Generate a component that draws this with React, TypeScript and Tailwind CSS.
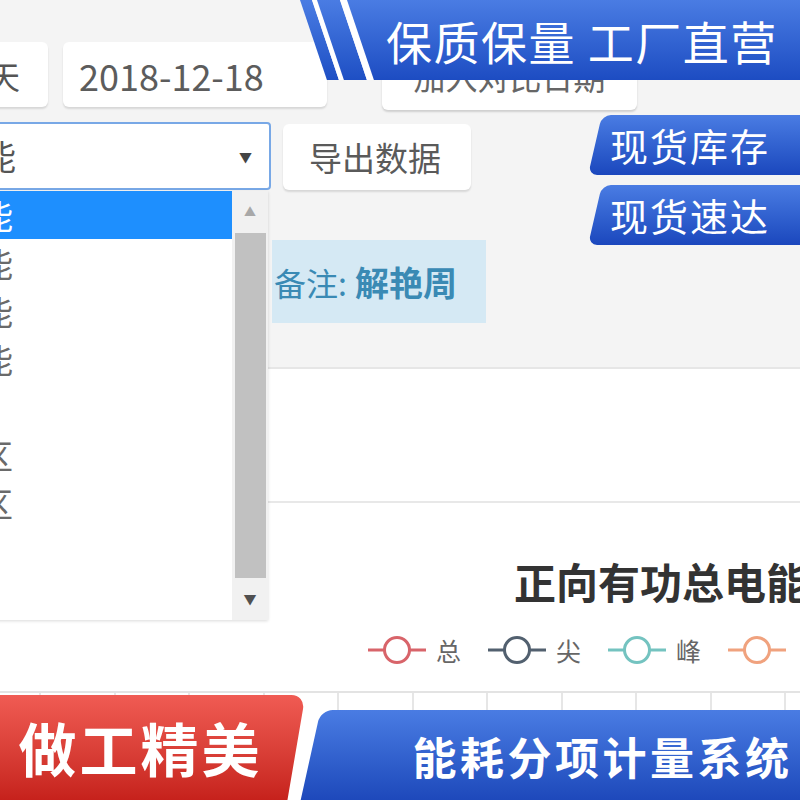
import React from "react";

const items = [
  { t: "正向有功总电能", sel: true, pr: 0 },
  { t: "反向有功总电能", sel: false, pr: 0 },
  { t: "正向无功总电能", sel: false, pr: 0 },
  { t: "反向无功总电能", sel: false, pr: 0 },
  { t: "电流", sel: false, pr: 60 },
  { t: "A区", sel: false, pr: 0 },
  { t: "B区", sel: false, pr: 0 },
];

const legend = [
  { c: "#d8646a", t: "总" },
  { c: "#52606f", t: "尖" },
  { c: "#74c3c0", t: "峰" },
  { c: "#f0a27e", t: "" },
];

function LegendIcon({ c }: { c: string }) {
  return (
    <svg width="58" height="30" viewBox="0 0 58 30">
      <line x1="0" y1="15" x2="58" y2="15" stroke={c} strokeWidth="3" />
      <circle cx="29" cy="15" r="12.5" fill="#fff" stroke={c} strokeWidth="3" />
    </svg>
  );
}

export default function App() {
  return (
    <div
      className="relative w-[800px] h-[800px] overflow-hidden bg-[#f4f4f4] text-[#555]"
      style={{ fontFamily: '"Noto Sans CJK SC", "Noto Sans", sans-serif' }}
    >
      {/* Row 1 */}
      <div className="flex pt-[42px]">
        <div className="-ml-[20px] w-[68px] h-[65px] bg-white rounded-md shadow-[0_2px_2px_rgba(0,0,0,0.12)] flex items-center pl-[8px] text-[32px] leading-none">
          天
        </div>
        <div className="ml-[15px] w-[264px] h-[65px] bg-white rounded-md shadow-[0_2px_2px_rgba(0,0,0,0.12)] flex items-center pl-[16px] text-[36px] leading-none text-[#5c5c5c]">
          2018-12-18
        </div>
        <div className="ml-[55px] w-[255px] h-[68px] bg-white rounded-md shadow-[0_2px_2px_rgba(0,0,0,0.15)] flex items-center justify-center text-[32px] leading-none text-[#666]">
          加入对比日期
        </div>
      </div>

      {/* Row 2 */}
      <div className="flex items-start mt-[12px]">
        <div className="-ml-[40px] w-[311px] h-[68px] bg-white border-2 border-[#78a8e6] rounded-sm flex items-center justify-between pl-[20px] pr-[17px]">
          <span className="text-[34px] leading-none text-[#555] -ml-[34px]">电能</span>
          <span className="text-[13px] leading-none text-[#444]">▼</span>
        </div>
        <div className="ml-[12px] mt-[2px] w-[188px] h-[66px] bg-white rounded-md shadow-[0_2px_2px_rgba(0,0,0,0.12)] flex items-center pl-[26px] text-[33px] leading-none text-[#5a5a5a]">
          导出数据
        </div>
      </div>

      {/* Note */}
      <div className="ml-[272px] mt-[50px] w-[214px] h-[83px] bg-[#d5e9f4] flex items-center pl-[2px] text-[32px] leading-none text-[#3a8ab4]">
        <span>备注:</span>
        <span className="ml-[8px] font-bold text-[34px]">解艳周</span>
      </div>

      {/* White panel */}
      <div className="mt-[44px] bg-white border-t-2 border-[#e6e6e6] h-[500px]">
        <div className="h-[134px] border-b-2 border-[#e8e8e8]" />
        <div className="flex justify-start pl-[514px] pt-[57px] text-[42px] leading-none font-bold text-[#333] whitespace-nowrap">
          正向有功总电能
        </div>
        <div className="flex items-center pl-[368px] mt-[33px] whitespace-nowrap">
          {legend.map((l, i) => (
            <div key={i} className="flex items-center w-[120px] shrink-0">
              <LegendIcon c={l.c} />
              {l.t && <span className="ml-[10px] text-[25px] leading-none text-[#666]">{l.t}</span>}
            </div>
          ))}
        </div>
        <div className="mt-[26px] border-t-2 border-[#e3e3e3] flex pl-[39px] h-[120px]">
          {Array.from({ length: 11 }).map((_, i) => (
            <div key={i} className="w-[74.5px] shrink-0 border-l-2 border-[#e6e6e6] h-full" />
          ))}
        </div>
      </div>

      {/* Dropdown */}
      <div className="absolute left-[-100px] top-[191px] w-[368px] h-[429px] bg-white flex shadow-[0_1px_3px_rgba(0,0,0,0.15)]">
        <div className="flex-1 min-w-0 flex flex-col">
          {items.map((it, i) => (
            <div
              key={i}
              className={`h-[48px] flex items-center justify-end text-[33px] leading-none whitespace-nowrap overflow-hidden ${
                it.sel ? "bg-[#1e8ffe] text-white w-full" : "text-[#6a6a6a] w-[113px]"
              }`}
            >
              <span className="shrink-0" style={{ marginRight: it.sel ? 219 : it.pr }}>
                {it.t}
              </span>
            </div>
          ))}
        </div>
        <div className="w-[36px] shrink-0 bg-[#f1f1f1] flex flex-col items-center">
          <div className="h-[42px] flex items-center justify-center text-[12px] text-[#a8a8a8]">▲</div>
          <div className="w-[31px] h-[345px] bg-[#c1c1c1]" />
          <div className="flex-1 flex items-center justify-center text-[13px] text-[#505050]">▼</div>
        </div>
      </div>

      {/* Top banner */}
      <div className="absolute top-0 left-[300px] w-[540px] h-[80px]">
        <div className="absolute inset-0 origin-top-left skew-x-[18.6deg] flex">
          <div className="w-[12px] bg-gradient-to-b from-[#4a7ce3] to-[#1e4fc4]" />
          <div className="w-[5px] bg-white" />
          <div className="w-[23px] bg-gradient-to-b from-[#4a7ce3] to-[#1e4fc4]" />
          <div className="w-[7px] bg-white" />
          <div className="flex-1 bg-gradient-to-b from-[#4a7ce3] to-[#1d4cc2]" />
        </div>
        <div className="relative pl-[86px] pt-[16px] text-[46px] leading-[48px] text-white whitespace-nowrap tracking-[1.5px]">
          保质保量 工厂直营
        </div>
      </div>

      {/* Side badges */}
      {[
        { t: "现货库存", top: 115 },
        { t: "现货速达", top: 185 },
      ].map((b) => (
        <div
          key={b.t}
          className="absolute left-[595px] w-[260px] h-[60px] -skew-x-[13deg] rounded-l-[9px] bg-gradient-to-b from-[#4a7ce3] to-[#1b47bd] flex items-center"
          style={{ top: b.top }}
        >
          <span className="skew-x-[13deg] ml-[15px] text-[38px] leading-none text-white tracking-[2px] whitespace-nowrap">
            {b.t}
          </span>
        </div>
      ))}

      {/* Bottom red badge */}
      <div className="absolute left-[-50px] top-[695px] w-[346px] h-[110px] -skew-x-[9.7deg] rounded-tr-[14px] bg-gradient-to-b from-[#f05b53] to-[#c41d18] flex items-center">
        <span className="skew-x-[9.7deg] ml-[68px] -mt-[6px] text-[58px] leading-none font-bold text-white whitespace-nowrap tracking-[3px]">
          做工精美
        </span>
      </div>

      {/* Bottom blue badge */}
      <div className="absolute left-[310px] top-[710px] w-[540px] h-[96px] -skew-x-[12.5deg] rounded-tl-[12px] bg-gradient-to-b from-[#4a7ce3] to-[#1b45b8] flex items-center">
        <span className="skew-x-[12.5deg] ml-[102px] -mt-[4px] text-[44px] leading-none font-bold text-white whitespace-nowrap tracking-[3.5px]">
          能耗分项计量系统
        </span>
      </div>
    </div>
  );
}
